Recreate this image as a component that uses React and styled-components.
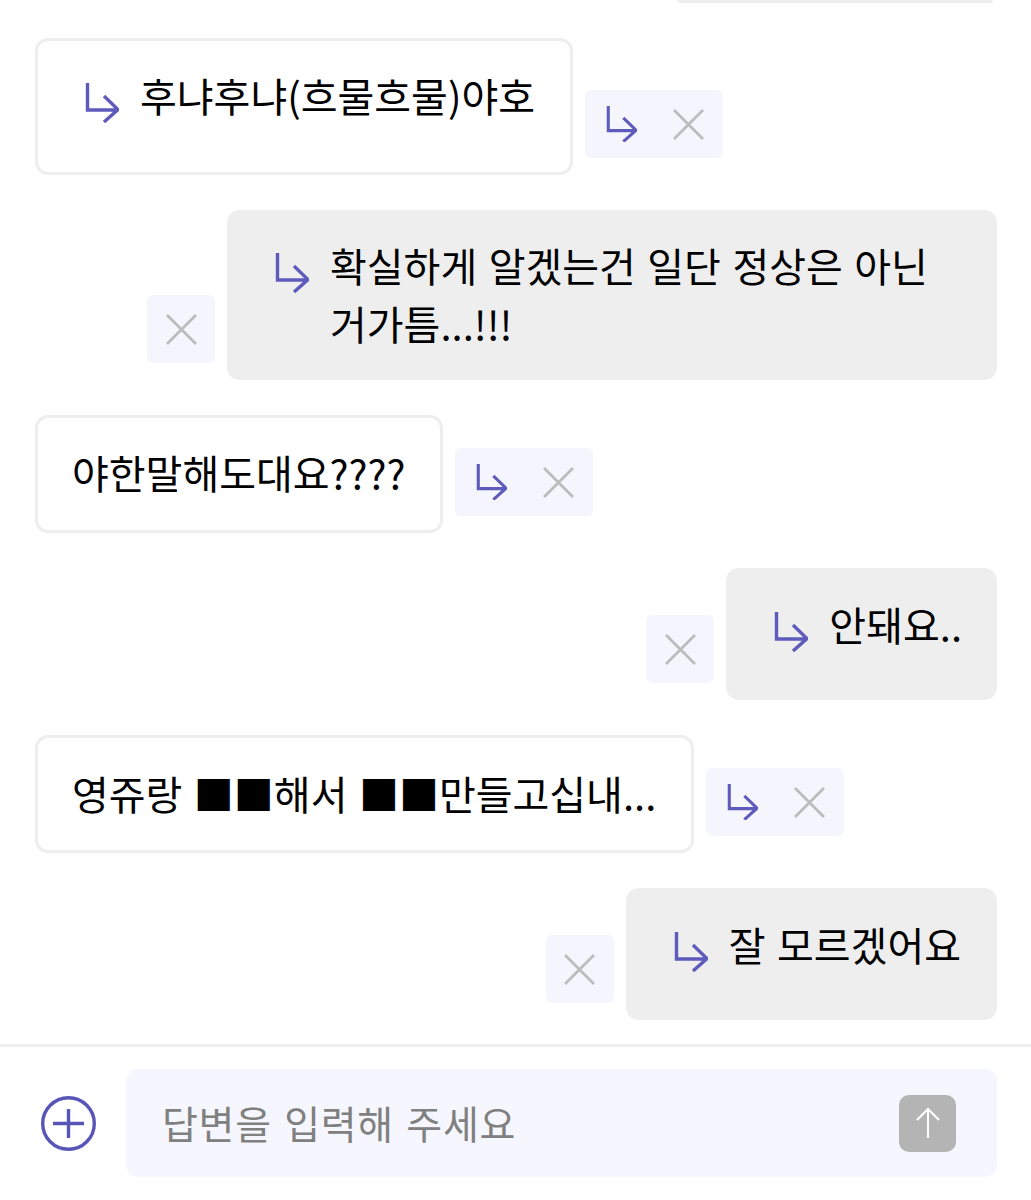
import React from "react";
import styled, { createGlobalStyle } from "styled-components";

const messages = [
  { id: 1, text: "후냐후냐(흐물흐물)야호", reply: true, pad: "25px 35px 48px 47px" },
  { id: 2, mine: true, text: "확실하게 알겠는건 일단 정상은 아닌 거가틈...!!!", reply: true, pad: "26px 36px 28px 48px" },
  { id: 3, text: "야한말해도대요????", pad: "25px 35px 29px 34px" },
  { id: 4, mine: true, text: "안돼요..", reply: true, pad: "27px 35px 47px 48px" },
  { id: 5, text: "영쥬랑 ■■해서 ■■만들고십내...", pad: "26px 35px 28px 34px" },
  { id: 6, mine: true, text: "잘 모르겠어요", reply: true, pad: "27px 36px 47px 48px" },
];

const ReplyIcon = ({ size = 34 }) => (
  <ReplySvg width={size} height={size * 1.18} viewBox="0 0 34 40" fill="none">
    <path d="M2.5 0V27H33M19 13l14 13.5L19 39" stroke="currentColor" strokeWidth="3.4" />
  </ReplySvg>
);

const CloseIcon = () => (
  <CloseSvg width="33" height="33" viewBox="0 0 33 33" fill="none">
    <path d="M2 2l29 29M31 2L2 31" stroke="currentColor" strokeWidth="2.8" />
  </CloseSvg>
);

const App = () => {
  return (
    <>
      <GlobalStyle />
      <Page>
        <Thread>
          <CutOffBubble />
          {messages.map((message) => (
            <Row key={message.id} $mine={message.mine}>
              {message.mine && (
                <Actions>
                  <CloseIcon />
                </Actions>
              )}
              <Bubble $mine={message.mine} $pad={message.pad}>
                {message.reply && (
                  <BubbleArrow>
                    <ReplyIcon />
                  </BubbleArrow>
                )}
                <BubbleText>{message.text}</BubbleText>
              </Bubble>
              {!message.mine && (
                <Actions $wide>
                  <ReplyIcon size={31} />
                  <CloseIcon />
                </Actions>
              )}
            </Row>
          ))}
        </Thread>
        <Composer>
          <PlusButton>
            <svg width="55" height="55" viewBox="0 0 55 55" fill="none">
              <circle cx="27.5" cy="27.5" r="25.8" stroke="#5855b8" strokeWidth="3.4" />
              <path d="M12 27.5H43M27.5 13V42" stroke="#5855b8" strokeWidth="3.4" />
            </svg>
          </PlusButton>
          <InputBox>
            <Placeholder>답변을 입력해 주세요</Placeholder>
            <SendButton>
              <svg width="26" height="32" viewBox="0 0 26 32" fill="none">
                <path d="M13 31V2M2 13L13 2l11 11" stroke="#fff" strokeWidth="2" />
              </svg>
            </SendButton>
          </InputBox>
        </Composer>
      </Page>
    </>
  );
};

const GlobalStyle = createGlobalStyle`
  body {
    margin: 0;
    background: #fff;
    font-family: "Noto Sans CJK KR", "Noto Sans", sans-serif;
  }
`;

const Page = styled.div`
  display: flex;
  flex-direction: column;
  height: 1200px;
  overflow: hidden;
  background: #fff;
`;

const Thread = styled.div`
  display: flex;
  flex-direction: column;
  gap: 35px;
  padding: 0 34px 24px 35px;
`;

const CutOffBubble = styled.div`
  align-self: flex-end;
  width: 315px;
  height: 3px;
  margin-right: 4px;
  background: #eeeeee;
  border-radius: 0 0 10px 10px;
`;

const Row = styled.div`
  display: flex;
  align-items: flex-end;
  justify-content: ${(props) => (props.$mine ? "flex-end" : "flex-start")};
  gap: 12px;
`;

const Bubble = styled.div`
  display: flex;
  box-sizing: border-box;
  max-width: 770px;
  padding: ${(props) => props.$pad};
  border: ${(props) => (props.$mine ? "none" : "3px solid #eeeeee")};
  border-radius: 13px;
  background: ${(props) => (props.$mine ? "#eeeeee" : "#ffffff")};
`;

const BubbleArrow = styled.div`
  flex: none;
  margin: 17px 21px 0 0;
  color: #5f5bbd;
`;

const BubbleText = styled.div`
  font-size: 40px;
  line-height: 58px;
  word-spacing: 2.5px;
  color: #000;
`;

const Actions = styled.div`
  display: flex;
  align-items: center;
  flex: none;
  gap: 35px;
  height: 68px;
  margin-bottom: 17px;
  padding: ${(props) => (props.$wide ? "0 18px 0 21px" : "0 17.5px")};
  border-radius: 6px;
  background: #f5f6fd;
  color: #5f5bbd;
`;

const ReplySvg = styled.svg`
  display: block;
`;

const CloseSvg = styled.svg`
  display: block;
  color: #bcbcbc;
`;

const Composer = styled.div`
  display: flex;
  align-items: center;
  gap: 30px;
  padding: 22px 34px 23px 41px;
  border-top: 3px solid #eeeeee;
`;

const PlusButton = styled.div`
  display: flex;
  flex: none;
`;

const InputBox = styled.div`
  display: flex;
  flex: 1;
  align-items: center;
  justify-content: space-between;
  box-sizing: border-box;
  height: 108px;
  padding: 0 41px 0 36px;
  border-radius: 12px;
  background: #f6f7fe;
`;

const Placeholder = styled.div`
  margin-bottom: 3px;
  font-size: 39px;
  line-height: 56px;
  word-spacing: 3px;
  letter-spacing: 0.7px;
  color: #808080;
`;

const SendButton = styled.div`
  display: flex;
  align-items: center;
  justify-content: center;
  width: 57px;
  height: 57px;
  border-radius: 10px;
  background: #b4b4b4;
`;

export default App;
